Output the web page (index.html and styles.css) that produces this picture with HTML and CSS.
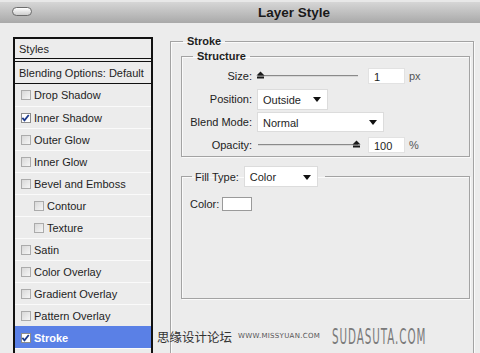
FILE: index.html
```html
<!DOCTYPE html>
<html lang="en">
<head>
<meta charset="UTF-8">
<meta name="viewport" content="width=device-width, initial-scale=1.0">
<title>Layer Style</title>
<link rel="stylesheet" href="styles.css">
</head>
<body>
  <div class="titlebar">
    <span class="pill"></span>
    <span class="title">Layer Style</span>
  </div>

  <div class="dialog">
    <div class="styles-list">
      <div class="item head">Styles</div>
      <div class="item blend">Blending Options: Default</div>
      <div class="item"><span class="cb"></span>Drop Shadow</div>
      <div class="item"><span class="cb on"><svg width="10" height="10" viewBox="0 0 10 10"><path d="M1.5 4.8 L3.9 7.6 L8.6 1.6" fill="none" stroke="#1c3a8c" stroke-width="2"/></svg></span>Inner Shadow</div>
      <div class="item"><span class="cb"></span>Outer Glow</div>
      <div class="item"><span class="cb"></span>Inner Glow</div>
      <div class="item"><span class="cb"></span>Bevel and Emboss</div>
      <div class="item sub"><span class="cb"></span>Contour</div>
      <div class="item sub"><span class="cb"></span>Texture</div>
      <div class="item"><span class="cb"></span>Satin</div>
      <div class="item"><span class="cb"></span>Color Overlay</div>
      <div class="item"><span class="cb"></span>Gradient Overlay</div>
      <div class="item"><span class="cb"></span>Pattern Overlay</div>
      <div class="item active"><span class="cb on"><svg width="10" height="10" viewBox="0 0 10 10"><path d="M1.5 4.8 L3.9 7.6 L8.6 1.6" fill="none" stroke="#1c3a8c" stroke-width="2"/></svg></span>Stroke</div>
      <div class="item"></div>
    </div>

    <fieldset class="group stroke">
      <legend>Stroke</legend>

      <fieldset class="group structure">
        <legend>Structure</legend>
        <div class="form">
          <span class="lbl">Size:</span>
          <div class="ctl">
            <span class="slider"><span class="track"></span><svg class="thumb left" width="9" height="8" viewBox="0 0 9 8"><path d="M0.5 4.5 L4.5 0.5 L8.5 4.5 Z" fill="#1a1a1a"/><rect x="1" y="5.5" width="7" height="2" fill="#1a1a1a"/></svg></span>
            <span class="num">1</span>
            <span class="unit">px</span>
          </div>

          <span class="lbl">Position:</span>
          <div class="ctl">
            <span class="select pos">Outside<i class="arrow"></i></span>
          </div>

          <span class="lbl">Blend Mode:</span>
          <div class="ctl">
            <span class="select mode">Normal<i class="arrow"></i></span>
          </div>

          <span class="lbl">Opacity:</span>
          <div class="ctl">
            <span class="slider"><span class="track"></span><svg class="thumb right" width="9" height="8" viewBox="0 0 9 8"><path d="M0.5 4.5 L4.5 0.5 L8.5 4.5 Z" fill="#1a1a1a"/><rect x="1" y="5.5" width="7" height="2" fill="#1a1a1a"/></svg></span>
            <span class="num">100</span>
            <span class="unit">%</span>
          </div>
        </div>
      </fieldset>

      <fieldset class="group fill">
        <legend><span>Fill Type:</span><span class="select type">Color<i class="arrow"></i></span></legend>
        <div class="fill-body">
          <span>Color:</span>
          <span class="swatch"></span>
        </div>
      </fieldset>
    </fieldset>
  </div>

  <div class="watermark">
    <span class="cn">思缘设计论坛</span>
    <span class="url">WWW.MISSYUAN.COM</span>
    <span class="brand">SUDASUTA.COM</span>
  </div>
</body>
</html>
```

FILE: styles.css
```css
body {
  margin: 0;
  height: 353px;
  overflow: hidden;
  position: relative;
  background-color: #ececec;
  font-family: "Liberation Sans", Arial, sans-serif;
  font-size: 11px;
  color: #1e1e1e;
}

/* title bar */
.titlebar {
  display: flex;
  align-items: center;
  height: 23px;
  box-sizing: border-box;
  border-top: 2px solid #e8e8e8;
  background: linear-gradient(#d6d6d6, #a9a9a9);
}

.pill {
  width: 20px;
  height: 9px;
  margin-left: 12px;
  margin-top: -3px;
  box-sizing: border-box;
  border: 1px solid #6c6c6c;
  border-radius: 5px;
  background: linear-gradient(#ffffff, #cdcdcd);
}

.title {
  margin-left: 226px;
  font-size: 13.5px;
  font-weight: bold;
  color: #1a1a1a;
}

.dialog {
  display: flex;
  align-items: flex-start;
}

/* left list */
.styles-list {
  width: 140px;
  height: 340px;
  margin: 14px 0 0 13px;
  box-sizing: border-box;
  border: 2px solid #111;
  border-bottom: 0;
  background-color: #ececec;
}

.item {
  display: flex;
  align-items: center;
  height: 22px;
  box-sizing: border-box;
  padding-left: 6px;
  border-top: 1px solid #fafafa;
}

.item.head {
  height: 23px;
  border-top: 0;
  padding-left: 4px;
  border-bottom: 4px double #111;
}

.item.blend {
  height: 22px;
  border-top: 0;
  padding-left: 4px;
  border-bottom: 1px solid #111;
}

.item.blend + .item {
  border-top: 0;
}

.item.sub {
  padding-left: 19px;
}

.item.active {
  background-color: #5a80e6;
  color: #fff;
  font-weight: bold;
  border-top-color: #5a80e6;
}

.cb {
  display: inline-flex;
  width: 10px;
  height: 10px;
  margin-right: 3px;
  box-sizing: border-box;
  border: 1px solid #ababab;
  background: linear-gradient(135deg, #d8d8d8, #f6f6f6);
  overflow: visible;
}

.cb.on {
  border-color: #8c8c8c;
  background: #fff;
}

.cb svg {
  margin: -1px 0 0 -1px;
}

/* group boxes */
.group {
  margin: 0;
  padding: 0;
  min-width: 0;
  border: 1px solid #a3a3a3;
  box-shadow: inset 1px 1px 0 #fafafa, 1px 1px 0 #fafafa;
}

.group legend {
  padding: 0 4px;
  line-height: 12px;
  font-weight: bold;
}

.stroke {
  width: 304px;
  height: 330px;
  margin: 12px 0 0 17px;
  padding: 0 3px 0 10px;
  box-sizing: border-box;
}

.stroke > legend {
  margin-left: 2px;
}

.structure {
  margin-top: 3px;
}

.structure > legend {
  margin-left: 11px;
}

.form {
  display: grid;
  grid-template-columns: 70px 1fr;
  grid-auto-rows: 22px;
  column-gap: 5px;
  row-gap: 1px;
  padding-top: 3px;
}

.lbl {
  display: flex;
  align-items: center;
  justify-content: flex-end;
  color: #222;
}

.ctl {
  display: flex;
  align-items: center;
}

.slider {
  position: relative;
  width: 104px;
  height: 10px;
  margin-right: 7px;
}

.track {
  display: block;
  margin: 4px 0 0 1px;
  width: 100px;
  height: 1px;
  background-color: #8a8a8a;
  border-bottom: 1px solid #d8d8d8;
}

.thumb {
  position: absolute;
  top: 0;
}

.thumb.left {
  left: -1px;
}

.thumb.right {
  right: 0;
}

.num {
  width: 37px;
  height: 16px;
  box-sizing: border-box;
  padding: 2px 0 0 5px;
  background-color: #fff;
  border: 1px solid #e2e2e2;
}

.unit {
  margin-left: 4px;
  color: #555;
}

.select {
  display: flex;
  align-items: center;
  justify-content: space-between;
  height: 21px;
  box-sizing: border-box;
  padding: 1px 6px 0 5px;
  background-color: #fff;
  border: 1px solid #dcdcdc;
  font-weight: normal;
  color: #1e1e1e;
}

.select.pos {
  width: 71px;
}

.select.mode {
  width: 127px;
  height: 20px;
}

.select.type {
  width: 74px;
}

.arrow {
  width: 0;
  height: 0;
  border-left: 4px solid transparent;
  border-right: 4px solid transparent;
  border-top: 5px solid #111;
}

.fill {
  margin-top: 9px;
}

.fill > legend {
  display: flex;
  align-items: center;
  gap: 5px;
  margin-left: 10px;
  padding: 0 7px 0 3px;
  font-weight: normal;
}

.fill-body {
  display: flex;
  align-items: flex-start;
  gap: 3px;
  height: 111px;
  box-sizing: border-box;
  padding: 11px 0 0 8px;
}

.swatch {
  width: 30px;
  height: 14px;
  box-sizing: border-box;
  border: 1px solid #9a9a9a;
  background-color: #fff;
  margin-top: -1px;
}

/* watermark over the dialog */
.watermark {
  position: absolute;
  left: 157px;
  top: 325px;
  display: flex;
  align-items: center;
  height: 22px;
  white-space: nowrap;
}

.cn {
  flex-shrink: 0;
  font-family: "Noto Sans CJK SC", sans-serif;
  font-size: 12.5px;
  color: #333;
}

.url {
  flex-shrink: 0;
  margin-left: 6px;
  font-family: "DejaVu Sans", sans-serif;
  font-size: 7px;
  color: #555;
  letter-spacing: 0.3px;
}

.brand {
  flex-shrink: 0;
  margin-left: 12px;
  font-family: "DejaVu Sans", sans-serif;
  font-size: 22px;
  color: #7a7a7a;
  transform: scaleX(0.47);
  transform-origin: left center;
  letter-spacing: 2px;
}
```
